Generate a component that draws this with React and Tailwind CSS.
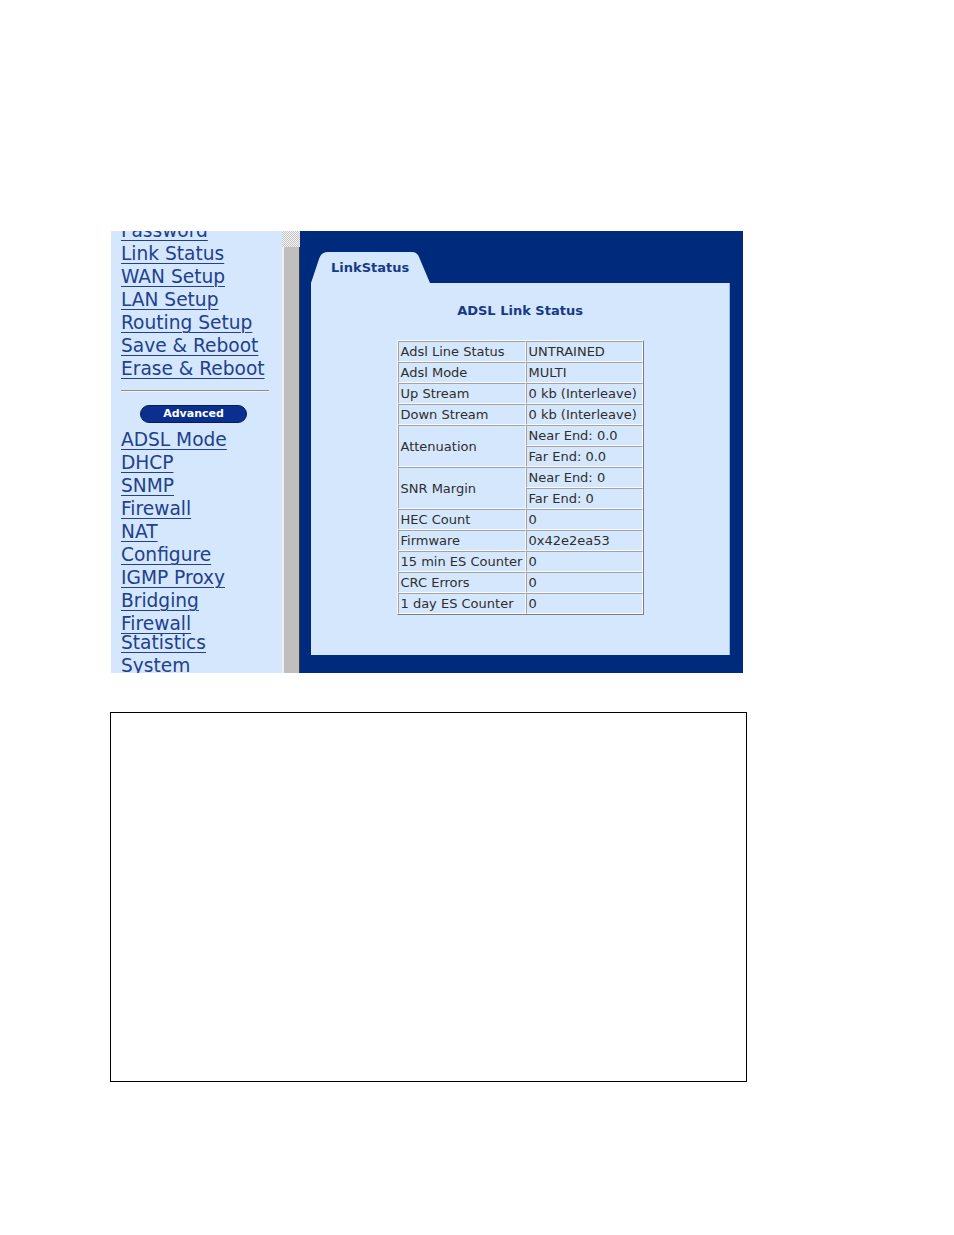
import React from 'react';

const topLinks = ['Password', 'Link Status', 'WAN Setup', 'LAN Setup', 'Routing Setup', 'Save & Reboot', 'Erase & Reboot'];
const advLinks = ['ADSL Mode', 'DHCP', 'SNMP', 'Firewall', 'NAT', 'Configure', 'IGMP Proxy', 'Bridging', 'Firewall Statistics', 'System'];

const rows = [
    { label: 'Adsl Line Status', values: ['UNTRAINED'] },
    { label: 'Adsl Mode', values: ['MULTI'] },
    { label: 'Up Stream', values: ['0 kb (Interleave)'] },
    { label: 'Down Stream', values: ['0 kb (Interleave)'] },
    { label: 'Attenuation', values: ['Near End: 0.0', 'Far End: 0.0'] },
    { label: 'SNR Margin', values: ['Near End: 0', 'Far End: 0'] },
    { label: 'HEC Count', values: ['0'] },
    { label: 'Firmware', values: ['0x42e2ea53'] },
    { label: '15 min ES Counter', values: ['0'] },
    { label: 'CRC Errors', values: ['0'] },
    { label: '1 day ES Counter', values: ['0'] },
];

const cell = 'border border-t-[#a3a3a3] border-l-[#a3a3a3] border-b-[#f7faff] border-r-[#f7faff] px-[2px] py-0 leading-[19px] text-left align-middle whitespace-nowrap';

const NavLinkItem = ({ name }) => (
    <a href="#" className="block text-[18.6px] leading-[19px] text-[#21408e] underline underline-offset-[3px] decoration-1">
        {name}
    </a>
);

const Sidebar = () => (
    <div className="w-[171px] h-full bg-[#d5e7fc] overflow-hidden pl-[10px]">
        <div className="w-[148px] -mt-[10px]">
            <div className="flex flex-col gap-[4px]">
                {topLinks.map((l) => <NavLinkItem key={l} name={l} />)}
            </div>

            {/* separator */}
            <div className="mt-[12px] h-[2px] border-t border-t-[#8d8d8d] border-b border-b-[#eef4fc]" />

            <div className="mt-[13px] pl-[19px]">
                <div className="w-[107px] h-[18px] rounded-full bg-[#0a2f8f] border border-[#061d5c] flex items-center justify-center text-white text-[11px] font-bold">
                    Advanced
                </div>
            </div>

            <div className="mt-[7px] flex flex-col gap-[4px]">
                {advLinks.map((l) => <NavLinkItem key={l} name={l} />)}
            </div>
        </div>
    </div>
);

const Scrollbar = () => (
    <div className="w-[18px] h-full flex flex-col">
        <div className="h-[16px] bg-[repeating-conic-gradient(#c4c4c4_0_25%,#f4f4f4_0_50%)] bg-[length:2px_2px]" />
        <div className="flex-1 bg-[#bfbfbf] border-l-2 border-l-[#f0f0f0] border-r border-r-[#3a3a3a]" />
    </div>
);

function join(...c) {
    return c.join(' ');
}

const LinkTable = () => (
    <table className="table-fixed w-[247px] border-separate border-spacing-0 border border-t-[#f7faff] border-l-[#f7faff] border-b-[#7d7d7d] border-r-[#7d7d7d] text-[13px] text-[#2e2e2e]">
        <tbody>
            {rows.map((r) =>
                r.values.length === 1 ? (
                    <tr key={r.label}>
                        <td className={join(cell, 'w-[128px]')}>{r.label}</td>
                        <td className={cell}>{r.values[0]}</td>
                    </tr>
                ) : (
                    <React.Fragment key={r.label}>
                        <tr>
                            <td rowSpan={2} className={cell}>{r.label}</td>
                            <td className={cell}>{r.values[0]}</td>
                        </tr>
                        <tr>
                            <td className={cell}>{r.values[1]}</td>
                        </tr>
                    </React.Fragment>
                )
            )}
        </tbody>
    </table>
);

const Content = () => (
    <div className="flex-1 h-full bg-[#002a7c] pt-[21px] pl-[11px]">
        {/* tab */}
        <div className="relative w-[119px] h-[31px] flex items-center pl-[20px]">
            <svg className="absolute inset-0" width="119" height="31" viewBox="0 0 119 31">
                <path d="M0 31 L8 7 Q10 0 17 0 L101 0 Q106 0 108 5 L119 31 Z" fill="#d5e7fc" />
            </svg>
            <span className="relative text-[13px] font-bold text-[#173a88]">LinkStatus</span>
        </div>

        {/* panel */}
        <div className="w-[419px] h-[372px] bg-[#d5e7fc] border-r border-r-[#9fb4dc] flex flex-col items-center">
            <div className="mt-[20px] text-[13px] font-bold text-[#173a88] leading-[16px]">ADSL Link Status</div>
            <div className="mt-[21px]">
                <LinkTable />
            </div>
        </div>
    </div>
);

export default function App() {
    return (
        <div className="w-[954px] h-[1235px] bg-white font-['DejaVu_Sans',Verdana,sans-serif] pt-[231px]">
            <div className="ml-[111px] w-[632px] h-[442px] flex">
                <Sidebar />
                <Scrollbar />
                <Content />
            </div>

            <div className="ml-[110px] mt-[39px] w-[637px] h-[370px] border border-black" />
        </div>
    );
}
